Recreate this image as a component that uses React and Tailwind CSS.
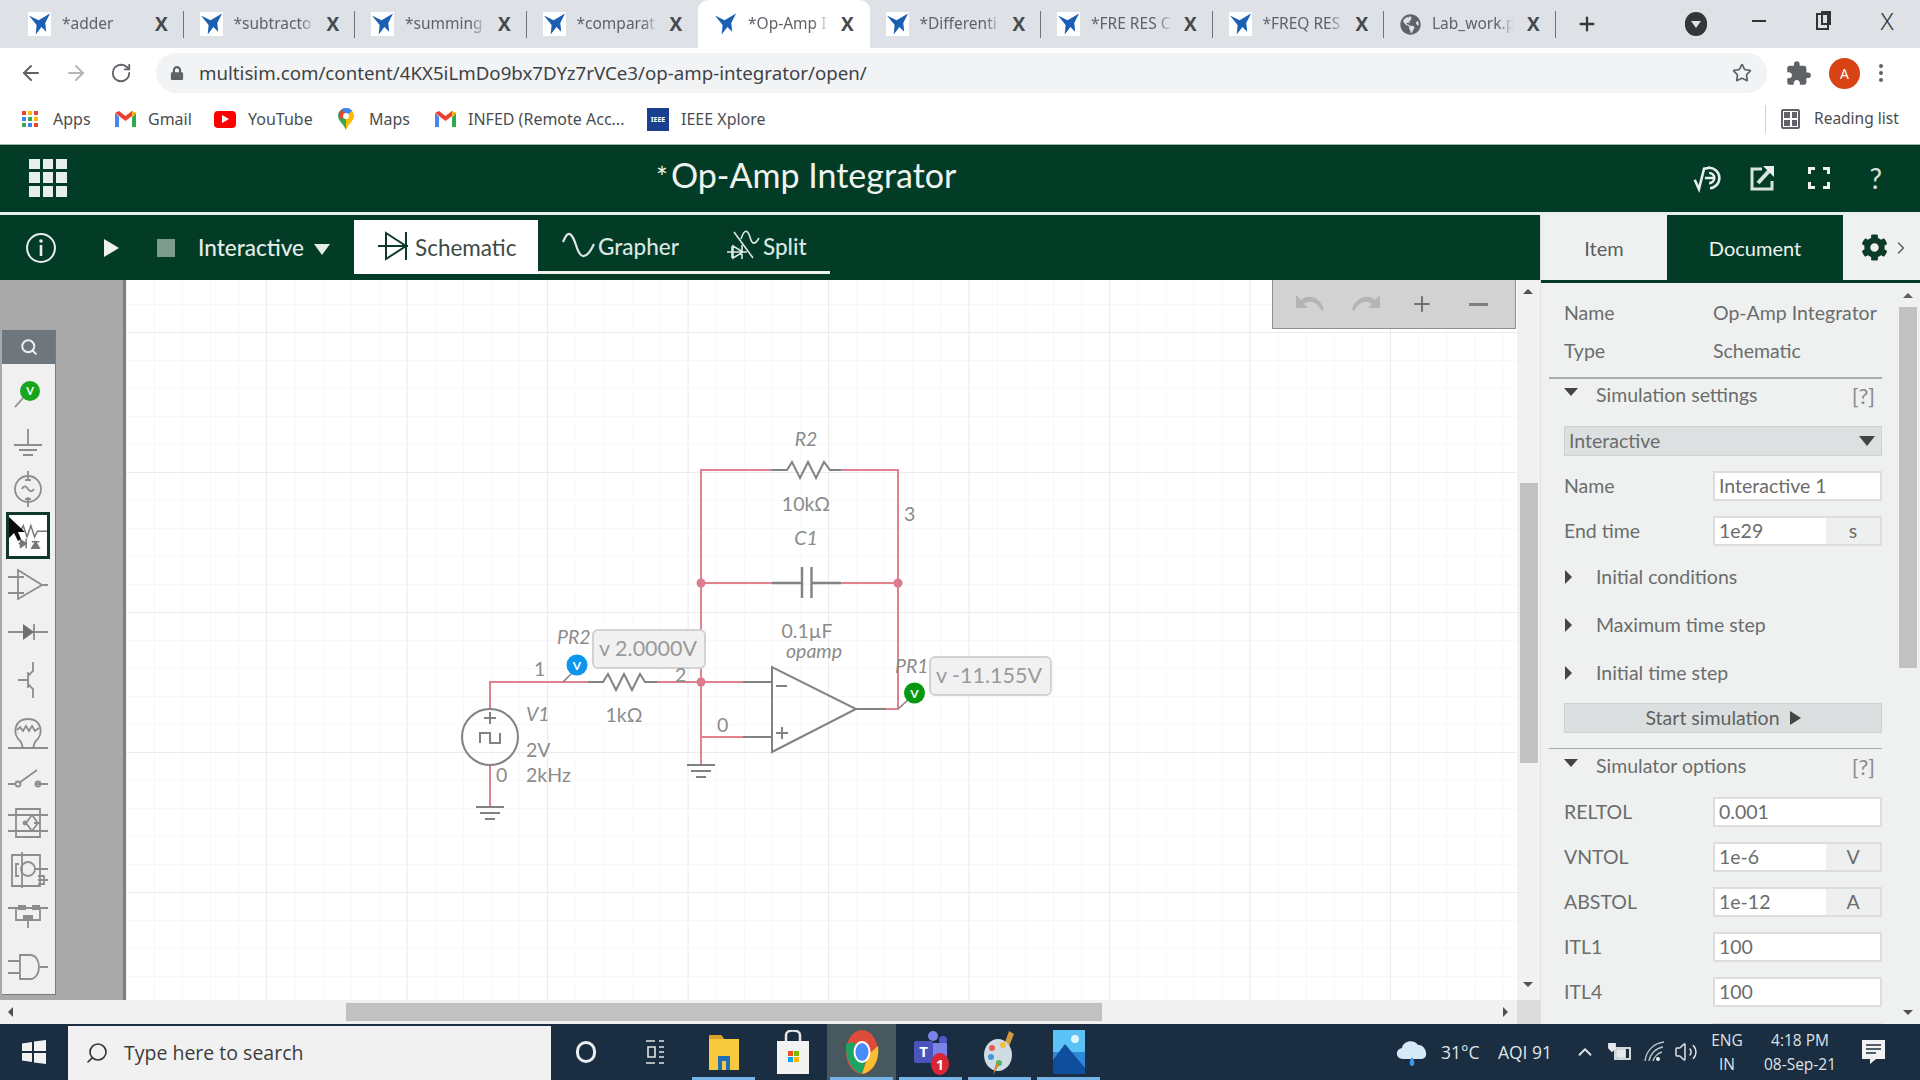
import React from "react";
import { ArrowLeft, ArrowRight, RotateCw, Star, Plus, Search, ChevronUp, Volume2, ChevronRight } from "lucide-react";
import { MdExtension } from "react-icons/md";
import { FaCog, FaLock, FaGlobeAmericas } from "react-icons/fa";

const Logo = () => (
  <svg width="23" height="24" viewBox="0 0 24 24" className="shrink-0 bg-white">
    <path d="M1 3 L11 8 L23 1 L18 11 L19 20 L14 15 L8 23 L9 13 Z" fill="#1b5fb4" />
  </svg>
);

const tabs = ["*adder", "*subtracto", "*summing", "*comparat", "*Op-Amp I", "*Differenti", "*FRE RES C", "*FREQ RES", "Lab_work.p"];

function Tab({ title, index }) {
  const active = index === 4;
  return (
    <div className={active ? "relative flex h-[48px] w-[171.5px] shrink-0 items-center rounded-t-[10px] bg-white pl-[16px]" : "relative flex h-[48px] w-[171.5px] shrink-0 items-center pl-[16px]"}>
      {index === 8 ? <FaGlobeAmericas className="shrink-0 text-[#5f6368]" size={21} /> : <Logo />}
      <span className="ml-[11px] w-[82px] overflow-hidden whitespace-nowrap text-[15.5px] text-[#5f6368] [mask-image:linear-gradient(90deg,#000_80%,transparent)]">{title}</span>
      <span className="absolute left-[143px] text-[19px] font-bold leading-none text-[#45494d] font-['Open_Sans']">X</span>
      {!active && index !== 3 && <span className="absolute right-0 top-[11px] h-[27px] w-px bg-[#70757a]" />}
    </div>
  );
}

function TabStrip() {
  return (
    <div className="flex h-[48px] shrink-0 items-center bg-[#dee1e6] pl-[12px] font-['Noto_Sans']">
      {tabs.map((t, i) => <Tab key={t} title={t} index={i} />)}
      <Plus size={22} strokeWidth={2.5} className="ml-[20px] text-[#33373a]" />
      <div className="ml-[87px] flex h-[24px] w-[22px] items-center justify-center rounded-full bg-[#33373a]">
        <span className="h-0 w-0 border-x-[5px] border-t-[7px] border-x-transparent border-t-[#dee1e6]" />
      </div>
      <span className="ml-[45px] mb-[6px] h-[2px] w-[14px] bg-[#333]" />
      <span className="relative ml-[50px] mb-[6px] h-[17px] w-[13px] border-2 border-[#333] bg-[#dee1e6] before:absolute before:-right-[4px] before:-top-[4px] before:h-[14px] before:w-[10px] before:border-2 before:border-[#333]" />
      <span className="ml-[52px] mb-[6px] text-[24px] font-light leading-none text-[#333]">X</span>
    </div>
  );
}

function AddressRow() {
  return (
    <div className="flex h-[48px] shrink-0 items-center bg-white pt-[2px] font-['Noto_Sans']">
      <ArrowLeft size={24} className="ml-[19px] text-[#5f6368]" />
      <ArrowRight size={24} className="ml-[21px] text-[#b4b7ba]" />
      <RotateCw size={22} className="ml-[22px] text-[#5f6368]" />
      <div className="ml-[24px] flex h-[40px] w-[1611px] items-center rounded-full bg-[#f1f3f4] pl-[14px]">
        <FaLock size={14} className="text-[#5f6368]" />
        <span className="ml-[15px] whitespace-nowrap text-[18.7px] text-[#3f4246]">multisim.com/content/4KX5iLmDo9bx7DYz7rVCe3/op-amp-integrator/open/</span>
        <Star size={20} className="ml-auto mr-[15px] text-[#5f6368]" />
      </div>
      <MdExtension size={27} className="ml-[18px] text-[#5f6368]" />
      <div className="ml-[17px] flex h-[31px] w-[31px] items-center justify-center rounded-full bg-[#d84315] text-[14px] text-white">A</div>
      <div className="ml-[19px] flex flex-col gap-[3px]">
        <span className="h-[4px] w-[4px] rounded-full bg-[#5f6368]" />
        <span className="h-[4px] w-[4px] rounded-full bg-[#5f6368]" />
        <span className="h-[4px] w-[4px] rounded-full bg-[#5f6368]" />
      </div>
    </div>
  );
}

const GmailIcon = () => (
  <svg width="21" height="16" viewBox="0 0 21 16">
    <path d="M0 2 L0 16 L4 16 L4 6 Z" fill="#4285f4" />
    <path d="M21 2 L21 16 L17 16 L17 6 Z" fill="#34a853" />
    <path d="M0 2 L10.5 10 L21 2 L17 0 L10.5 5 L4 0 Z" fill="#ea4335" />
    <path d="M17 0 L21 2 L17 6 Z" fill="#fbbc04" />
  </svg>
);

function Bookmark({ icon, label, className }) {
  return (
    <div className={"flex items-center " + className}>
      <span className="flex w-[22px] shrink-0 justify-center">{icon}</span>
      <span className="ml-[12px] whitespace-nowrap text-[16px] text-[#4a4d50]">{label}</span>
    </div>
  );
}

const appsDots = [
  "h-[4px] w-[4px] bg-[#ea4335]", "h-[4px] w-[4px] bg-[#fbbc04]", "h-[4px] w-[4px] bg-[#ea4335]",
  "h-[4px] w-[4px] bg-[#4285f4]", "h-[4px] w-[4px] bg-[#34a853]", "h-[4px] w-[4px] bg-[#fbbc04]",
  "h-[4px] w-[4px] bg-[#34a853]", "h-[4px] w-[4px] bg-[#4285f4]", "h-[4px] w-[4px] bg-[#ea4335]",
];

function BookmarkRow() {
  return (
    <div className="flex h-[48px] shrink-0 items-center bg-white pb-[2px] pl-[19px] font-['Noto_Sans']">
      <Bookmark className="w-[95px]" label="Apps" icon={
        <span className="grid grid-cols-3 gap-[2px]">{appsDots.map((c, i) => <i key={i} className={c} />)}</span>
      } />
      <Bookmark className="w-[100px]" label="Gmail" icon={<GmailIcon />} />
      <Bookmark className="w-[121px]" label="YouTube" icon={
        <span className="flex h-[17px] w-[22px] items-center justify-center rounded-[4px] bg-[#f00]"><i className="h-0 w-0 border-y-[4px] border-l-[7px] border-y-transparent border-l-white" /></span>
      } />
      <Bookmark className="w-[99px]" label="Maps" icon={
        <svg width="16" height="22" viewBox="0 0 16 22">
          <path d="M8 0 C3 0 0 4 0 8 C0 13 5 15 8 22 Z" fill="#34a853" />
          <path d="M8 0 C13 0 16 4 16 8 C16 13 11 15 8 22 Z" fill="#fbbc04" />
          <path d="M3 2 C6 -1 11 -1 14 3 L8 8 Z" fill="#4285f4" />
          <path d="M1 5 L4 2 L8 6 L3 12 Z" fill="#ea4335" />
          <circle cx="8" cy="8" r="3" fill="#fff" />
        </svg>
      } />
      <Bookmark className="w-[213px]" label="INFED (Remote Acc..." icon={<GmailIcon />} />
      <Bookmark className="w-[200px]" label="IEEE Xplore" icon={
        <span className="flex h-[23px] w-[23px] items-center justify-center bg-[#1a3f8f] text-[7px] font-bold leading-none text-white">IEEE</span>
      } />
      <div className="ml-auto flex h-[28px] w-[155px] items-center border-l border-[#d0d2d4] pl-[15px]">
        <span className="grid h-[20px] w-[19px] grid-cols-2 gap-[2px] rounded-[2px] border-2 border-[#5f6368] p-[1px]">
          <i className="bg-[#5f6368]" /><i className="bg-[#5f6368]" /><i className="bg-[#5f6368]" /><i className="bg-[#5f6368]" />
        </span>
        <span className="ml-[14px] whitespace-nowrap text-[15.5px] text-[#4a4d50]">Reading list</span>
      </div>
    </div>
  );
}

function AppHeader() {
  return (
    <div className="relative flex h-[71px] shrink-0 items-center border-t border-[#9fb5ab] border-b-[3px] border-b-[#e9efec] bg-[#033c26] pb-[2px] font-['Lato']">
      <div className="ml-[29px] grid h-[38px] w-[38px] grid-cols-3 gap-[3px]">
        {Array.from({ length: 9 }).map((_, i) => <i key={i} className="bg-[#e8eeeb]" />)}
      </div>
      <div className="mb-[5px] ml-[589px] flex items-baseline whitespace-nowrap text-[34px] leading-none text-[#eef3f0]">
        <span className="mr-[3px] text-[28px]">*</span>Op-Amp Integrator
      </div>
      <div className="ml-auto flex items-center">
        <svg width="34" height="30" viewBox="0 0 40 34" fill="none" stroke="#e8eeeb" strokeWidth="3" className="mr-[23px]">
          <path d="M2 19 L7 30 L13 6 L20 5" />
          <path d="M18 5 A12 12 0 1 1 20 29" />
          <path d="M19 11 A6 6 0 1 1 19 23 M14 17 H24" />
        </svg>
        <svg width="24" height="28" viewBox="0 0 24 28" fill="none" stroke="#d9e3de" strokeWidth="3" className="mr-[34px]">
          <path d="M12 5 H2 V25 H22 V17" />
          <path d="M8 19 L20 6" strokeWidth="4" />
          <path d="M13 2 H24 V13 Z" fill="#e8eeeb" stroke="none" />
        </svg>
        <svg width="22" height="22" viewBox="0 0 22 22" fill="none" stroke="#eef3f0" strokeWidth="3" className="mr-[39px]">
          <path d="M1.5 7 V1.5 H7 M15 1.5 H20.5 V7 M1.5 15 V20.5 H7 M15 20.5 H20.5 V15" />
        </svg>
        <span className="mr-[38px] text-[28px] leading-none text-[#d9e3de]">?</span>
      </div>
    </div>
  );
}

function Toolbar() {
  return (
    <div className="flex h-[65px] shrink-0 items-center bg-[#033c26] font-['Lato']">
      <svg width="32" height="32" viewBox="0 0 32 32" fill="none" stroke="#e8eeeb" strokeWidth="2" className="ml-[25px]">
        <circle cx="16" cy="16" r="14" />
        <circle cx="16" cy="9" r="1.8" fill="#e8eeeb" stroke="none" />
        <path d="M16 13 V24" strokeWidth="2.6" />
      </svg>
      <span className="ml-[47px] h-0 w-0 border-y-[9px] border-l-[15px] border-y-transparent border-l-[#eef3f0]" />
      <span className="ml-[38px] h-[18px] w-[18px] bg-[#7d9a8e]" />
      <span className="ml-[23px] whitespace-nowrap text-[22.5px] font-medium text-[#e4ece8]">Interactive</span>
      <span className="ml-[10px] mt-[3px] h-0 w-0 border-x-[8px] border-t-[11px] border-x-transparent border-t-[#e4ece8]" />
      <div className="ml-[24px] flex items-stretch self-start pt-[5px]">
        <div className="flex h-[54px] w-[184px] items-center bg-white pl-[24px] text-[#3d4b45]">
          <svg width="32" height="32" viewBox="0 0 32 32" fill="none" stroke="#0c3b28" strokeWidth="2" className="mb-[4px]">
            <path d="M0 17 H30 M8 4 L28 17 L8 30 Z M28 3 V31" />
          </svg>
          <span className="ml-[5px] pt-[2px] text-[22.5px]">Schematic</span>
        </div>
        <div className="flex h-[54px] w-[292px] items-center border-b-[3px] border-[#eef3f0] text-[22.5px] font-medium text-[#dde6e2]">
          <svg width="34" height="30" viewBox="0 0 34 30" fill="none" stroke="#dde6e2" strokeWidth="2.2" className="ml-[24px]">
            <path d="M1 11 C6 -2 10 2 14 14 C18 28 24 30 32 13" />
          </svg>
          <span className="ml-[2px] pt-[2px]">Grapher</span>
          <svg width="36" height="32" viewBox="0 0 36 32" fill="none" stroke="#dde6e2" strokeWidth="1.6" className="ml-[48px]">
            <path d="M0 22 H20 M5 16 V28 M6 16 L16 22 L6 28 Z M15 15 V29" />
            <path d="M7 2 L26 28" />
            <path d="M14 9 C18 -3 21 1 23 7 C25 15 28 15 32 8" />
          </svg>
          <span className="pt-[2px]">Split</span>
        </div>
      </div>
    </div>
  );
}

const P = { fill: "none", stroke: "#8d8d8d", strokeWidth: 1.8 };

function Pal({ className, children }) {
  return <svg width="40" height="36" viewBox="0 0 40 36" {...P} className={"ml-[6px] block " + className}>{children}</svg>;
}

function Palette() {
  return (
    <div className="ml-[2px] mt-[50px] flex h-[665px] w-[54px] flex-col border-b border-r border-[#7a7a7a] bg-[#f0f0f0]">
      <div className="flex h-[34px] shrink-0 items-center justify-center bg-[#6d777d]">
        <Search size={18} strokeWidth={2.6} className="text-[#eef0f0]" />
      </div>
      <Pal className="mt-[9px]">
        <path d="M15 25 L7 34" />
        <circle cx="22" cy="18" r="10" fill="#16a51c" stroke="none" />
        <text x="22" y="22" textAnchor="middle" fontSize="11" fontWeight="700" fill="#fff" stroke="none" fontFamily="Lato">V</text>
      </Pal>
      <Pal className="mt-[16px]">
        <path d="M20 4 V20 M6 20 H34 M11 25 H29 M15 30 H25" />
      </Pal>
      <Pal className="mt-[10px]">
        <circle cx="20" cy="18" r="13" />
        <path d="M20 0 V10 M20 26 V36 M14 18 C16 14 18 15 20 18 C22 21 24 21 26 18 M17 9 H23 M17 28 H23" />
      </Pal>
      <div className="relative ml-[4px] mt-[5px] flex h-[47px] w-[44px] items-center justify-center border-[3px] border-[#10392a] bg-white">
        <svg width="38" height="34" viewBox="0 0 40 36" fill="none" stroke="#777" strokeWidth="1.6">
          <path d="M0 13 H12 L15 7 L19 19 L23 7 L27 19 L30 13 H40" />
          <path d="M10 26 H18 M12 22 L18 26 L12 30 Z M18 21 V31 M24 24 H32 M28 24 L24 31 H32 Z" fill="#777" />
        </svg>
        <svg width="18" height="26" viewBox="0 0 18 26" className="absolute -left-[1px] top-[1px]">
          <path d="M1 1 L1 22 L6 17 L10 25 L13 23 L10 16 L17 16 Z" fill="#0a0a0a" />
        </svg>
      </div>
      <Pal className="mt-[8px]">
        <path d="M10 3 L34 18 L10 32 Z M0 10 H16 M0 26 H16 M34 18 H40" />
      </Pal>
      <Pal className="mt-[11px]">
        <path d="M0 18 H40 M26 10 V26" />
        <path d="M15 10 L26 18 L15 26 Z" fill="#707070" stroke="none" />
      </Pal>
      <Pal className="mt-[12px]">
        <path d="M10 18 H20 M20 10 V26 M25 0 V9 L20 14 M20 22 L25 27 V36" />
      </Pal>
      <Pal className="mt-[17px]">
        <path d="M0 33 H40 M13 27 C3 18 7 4 20 4 C33 4 37 18 27 27 L25 33 H15 Z M9 15 L12 12 L15 16 L18 11 L21 16 L24 11 L27 16 L31 13" />
      </Pal>
      <Pal className="mt-[11px]">
        <path d="M0 22 H8 M28 22 H40 M11 21 L29 8" />
        <circle cx="10" cy="22" r="2.5" />
        <circle cx="30" cy="22" r="2.5" />
      </Pal>
      <Pal className="mt-[7px]">
        <path d="M8 4 H32 V32 H8 Z M0 10 H40 M0 26 H40 M24 10 L30 18 L24 26 L18 18 Z M26 18 H32" />
        <circle cx="17" cy="18" r="1.5" fill="#8d8d8d" />
      </Pal>
      <Pal className="mt-[11px]">
        <path d="M4 3 H32 V34 H4 Z M26 4 V2 M14 0 V36 M26 17 H40 M11 12 H8 V24 H11 M30 24 H36 V32 H30 M30 28 H40" />
        <circle cx="20" cy="17" r="7" />
      </Pal>
      <Pal className="mt-[6px]">
        <path d="M0 14 H40 M8 14 V26 H32 V14 M20 24 V34" />
        <path d="M10 11 H18 V16 H10 Z M24 11 H32 V16 H24 Z M15 21 H25 V26 H15 Z" fill="#8d8d8d" stroke="none" />
      </Pal>
      <Pal className="mt-[19px]">
        <path d="M0 12 H12 M0 24 H12 M12 6 H22 C34 6 34 30 22 30 H12 Z M32 18 H40" />
      </Pal>
    </div>
  );
}

const W = "#e2828f";
const G = "#828282";

function Ground({ x, y }) {
  return <path d={`M${x - 14} ${y} H${x + 14} M${x - 10} ${y + 6} H${x + 10} M${x - 5} ${y + 12} H${x + 5}`} stroke={G} strokeWidth="2" fill="none" />;
}

function Lbl({ x, y, children, italic, anchor = "start", size = 19.5 }) {
  return <text x={x} y={y} fontSize={size} textAnchor={anchor} fontStyle={italic ? "italic" : "normal"} fill="#8b8b8b" fontFamily="Lato">{children}</text>;
}

function Badge({ x, y, w, children }) {
  return (
    <g>
      <rect x={x} y={y} width={w} height="38" rx="5" fill="#f1f1f1" stroke="#d2d2d2" strokeWidth="2" />
      <text x={x + 6} y={y + 26} fontSize="21.5" fill="#9a9a9a" fontFamily="Lato">{children}</text>
    </g>
  );
}

function Circuit() {
  return (
    <svg width="1392" height="720" viewBox="125 280 1392 720" fill="none" className="absolute left-0 top-0">
      <g stroke={W} strokeWidth="2">
        <path d="M771 470 H700 V737 M840 470 H897 V709 H885" />
        <path d="M700 583 H771 M840 583 H897" />
        <path d="M489 710 V682 H587 M656 682 H742" />
        <path d="M742 737 H700 V765" />
        <path d="M489 766 V807" />
      </g>
      <g stroke={G} strokeWidth="2">
        <path d="M771 470 H786 L791 462 L799 478 L807 462 L815 478 L823 462 L829 470 H840" />
        <path d="M771 583 H801 M811 583 H840 M801 567 V598 M810.5 567 V598" strokeWidth="2.4" />
        <path d="M587 682 H602 L607 674 L615 690 L623 674 L631 690 L639 674 L644 682 H656" />
        <path d="M742 682 H771 M742 737 H771 M855 709 H885" />
        <path d="M771 667 V752 L855 709 Z" />
        <path d="M775 686 H786 M775 733 H787 M781 727 V739" />
        <ellipse cx="489" cy="737" rx="28" ry="28" />
        <path d="M483 718 H495 M489 712 V724" />
        <path d="M479 743 V733 H489 V743 H499 V733" />
      </g>
      <Ground x={489} y={807} />
      <Ground x={700} y={765} />
      <circle cx="700" cy="583" r="4.5" fill="#dc7c8a" />
      <circle cx="897" cy="583" r="4.5" fill="#dc7c8a" />
      <circle cx="700" cy="682" r="4.5" fill="#dc7c8a" />
      <path d="M562 682 L572 672" stroke={G} strokeWidth="1.6" />
      <circle cx="576" cy="665" r="10.5" fill="#0b95ec" />
      <text x="576" y="670" textAnchor="middle" fontSize="12" fontWeight="700" fill="#fff" fontFamily="Lato">V</text>
      <path d="M897 709 L908 699" stroke={G} strokeWidth="1.6" />
      <circle cx="913.5" cy="693" r="10.5" fill="#06980f" />
      <text x="913.5" y="698" textAnchor="middle" fontSize="12" fontWeight="700" fill="#fff" fontFamily="Lato">V</text>
      <Lbl x={805} y={446} italic anchor="middle">R2</Lbl>
      <Lbl x={805} y={511} anchor="middle">10kΩ</Lbl>
      <Lbl x={805} y={545} italic anchor="middle">C1</Lbl>
      <Lbl x={903} y={521}>3</Lbl>
      <Lbl x={806} y={638} anchor="middle">0.1µF</Lbl>
      <Lbl x={813} y={658} italic anchor="middle">opamp</Lbl>
      <Lbl x={533} y={676}>1</Lbl>
      <Lbl x={623} y={722} anchor="middle">1kΩ</Lbl>
      <Lbl x={525} y={721} italic>V1</Lbl>
      <Lbl x={525} y={757}>2V</Lbl>
      <Lbl x={495} y={782}>0</Lbl>
      <Lbl x={525} y={782}>2kHz</Lbl>
      <Lbl x={716} y={732}>0</Lbl>
      <Lbl x={556} y={644} italic>PR2</Lbl>
      <Lbl x={894} y={673} italic>PR1</Lbl>
      <Badge x={592} y={630} w={112}>v 2.0000V</Badge>
      <Lbl x={674} y={682}>2</Lbl>
      <Badge x={929} y={657} w={121}>v -11.155V</Badge>
    </svg>
  );
}

function Canvas() {
  return (
    <div className="relative h-[720px] flex-1 overflow-hidden bg-white bg-[linear-gradient(#ececec_1px,transparent_1px),linear-gradient(90deg,#ececec_1px,transparent_1px),linear-gradient(#f8f8f8_1px,transparent_1px),linear-gradient(90deg,#f8f8f8_1px,transparent_1px)] bg-[size:140.5px_140px,140.5px_140px,28.1px_28px,28.1px_28px] bg-[position:0_52px,140px_0,0_24px,28px_0]">
      <Circuit />
      <div className="absolute right-[1px] top-0 flex h-[49px] w-[244px] items-center border-x border-b border-[#8f8f8f] bg-[#d2d2d2] pl-[22px]">
        <svg width="30" height="20" viewBox="0 0 30 20" fill="#b4b4b4">
          <path d="M1 1 L1 14 L13 14 L9 10 C14 6 22 7 27 17 L29 15 C24 2 13 0 6 6 Z" />
        </svg>
        <svg width="30" height="20" viewBox="0 0 30 20" fill="#b4b4b4" className="ml-[26px]">
          <path d="M29 1 L29 14 L17 14 L21 10 C16 6 8 7 3 17 L1 15 C6 2 17 0 24 6 Z" />
        </svg>
        <Plus size={24} strokeWidth={2} className="ml-[29px] text-[#6f6f6f]" />
        <span className="ml-[35px] h-[3px] w-[19px] bg-[#7f7f7f]" />
      </div>
    </div>
  );
}

function HScroll() {
  return (
    <div className="flex h-[24px] shrink-0 items-center bg-[#f1f1f1]">
      <span className="ml-[8px] h-0 w-0 border-y-[5px] border-r-[5px] border-y-transparent border-r-[#505050]" />
      <div className="ml-[333px] h-[18px] w-[756px] bg-[#c1c1c1]" />
      <span className="ml-[401px] h-0 w-0 border-y-[5px] border-l-[5px] border-y-transparent border-l-[#505050]" />
    </div>
  );
}

function VScroll() {
  return (
    <div className="relative h-[744px] w-[23px] shrink-0 bg-[#f1f1f1]">
      <span className="absolute left-[6px] top-[9px] h-0 w-0 border-x-[5px] border-b-[5px] border-x-transparent border-b-[#505050]" />
      <div className="absolute left-[3px] top-[203px] h-[280px] w-[18px] bg-[#c1c1c1]" />
      <span className="absolute left-[6px] top-[702px] h-0 w-0 border-x-[5px] border-t-[5px] border-x-transparent border-t-[#505050]" />
      <div className="absolute bottom-0 left-0 h-[24px] w-full bg-[#dcdcdc]" />
    </div>
  );
}

function Row({ label, children, className = "" }) {
  return (
    <div className={"flex items-center " + className}>
      <span className="w-[149px] text-[19.5px] text-[#6a6d6c]">{label}</span>
      {children}
    </div>
  );
}

function Field({ value, unit }) {
  return (
    <div className="flex h-[30px] w-[169px] items-center border-2 border-[#dcdddc] bg-white pl-[4px] text-[19.5px] text-[#6a6d6c]">
      <span className="flex-1">{value}</span>
      {unit && <span className="flex h-full w-[54px] items-center justify-center bg-[#eef0ef]">{unit}</span>}
    </div>
  );
}

function Section({ label, className = "" }) {
  return (
    <div className={"flex h-[48px] items-center text-[19.5px] text-[#6a6d6c] " + className}>
      <span className="ml-[1px] h-0 w-0 border-y-[7px] border-l-[7px] border-y-transparent border-l-[#444]" />
      <span className="ml-[24px]">{label}</span>
    </div>
  );
}

function Head({ label }) {
  return (
    <div className="flex h-full items-center text-[19.5px] text-[#6a6d6c]">
      <span className="mb-[7px] h-0 w-0 border-x-[7px] border-t-[8px] border-x-transparent border-t-[#444]" />
      <span className="ml-[18px]">{label}</span>
      <span className="ml-auto mr-[7px] text-[22px] text-[#8a8a8a]">[?]</span>
    </div>
  );
}

function RightPanel() {
  return (
    <div className="flex h-[809px] w-[380px] shrink-0 flex-col overflow-hidden border-l border-[#dfe2e0] bg-[#eff1f0] font-['Lato']">
      <div className="flex h-[68px] shrink-0 border-b-[3px] border-[#033c26] text-[20px]">
        <div className="flex w-[126px] items-center justify-center text-[#5b5e5d]">Item</div>
        <div className="flex w-[176px] items-center justify-center bg-[#033c26] text-[#eef3f0]">Document</div>
        <div className="flex flex-1 items-center pl-[18px] text-[#0c3b28]">
          <FaCog size={27} />
          <ChevronRight size={20} strokeWidth={1.6} className="ml-[3px] text-[#4c5f57]" />
        </div>
      </div>
      <div className="flex min-h-0 flex-1">
        <div className="w-[358px] shrink-0 pl-[23px] pr-[17px] pt-[11px]">
          <Row label="Name" className="h-[38px]"><span className="whitespace-nowrap text-[19.5px] text-[#6a6d6c]">Op-Amp Integrator</span></Row>
          <Row label="Type" className="h-[38px]"><span className="text-[19.5px] text-[#6a6d6c]">Schematic</span></Row>
          <div className="-ml-[15px] mt-[7px] h-[2px] bg-[#a9acab]" />
          <div className="h-[32px]"><Head label="Simulation settings" /></div>
          <div className="mt-[15px] flex h-[30px] items-center justify-between border border-[#cfd2d1] bg-[#dde0e0] pl-[4px] pr-[6px] text-[19.5px] text-[#6a6d6c]">
            <span>Interactive</span>
            <span className="h-0 w-0 border-x-[8px] border-t-[10px] border-x-transparent border-t-[#444]" />
          </div>
          <Row label="Name" className="mt-[15px]"><Field value="Interactive 1" /></Row>
          <Row label="End time" className="mt-[15px]"><Field value="1e29" unit="s" /></Row>
          <Section label="Initial conditions" className="mt-[7px]" />
          <Section label="Maximum time step" />
          <Section label="Initial time step" />
          <div className="mt-[6px] flex h-[30px] items-center justify-center border border-[#cfd2d1] bg-[#dcdfdf] text-[19.5px] text-[#5f6261]">
            Start simulation
            <span className="ml-[10px] h-0 w-0 border-y-[7px] border-l-[11px] border-y-transparent border-l-[#444]" />
          </div>
          <div className="-ml-[15px] mt-[15px] h-[1px] bg-[#a9acab]" />
          <div className="h-[34px]"><Head label="Simulator options" /></div>
          <div className="mt-[14px] flex flex-col gap-[15px]">
            <Row label="RELTOL"><Field value="0.001" /></Row>
            <Row label="VNTOL"><Field value="1e-6" unit="V" /></Row>
            <Row label="ABSTOL"><Field value="1e-12" unit="A" /></Row>
            <Row label="ITL1"><Field value="100" /></Row>
            <Row label="ITL4"><Field value="100" /></Row>
          </div>
          <div className="ml-[149px] mt-[16px] h-[30px] w-[169px] border-2 border-[#dcdddc] bg-white" />
        </div>
        <div className="relative flex-1">
          <span className="absolute left-[4px] top-[10px] h-0 w-0 border-x-[5px] border-b-[5px] border-x-transparent border-b-[#606060]" />
          <div className="absolute left-[0px] top-[24px] h-[361px] w-[18px] bg-[#c1c1c1]" />
          <span className="absolute left-[4px] top-[727px] h-0 w-0 border-x-[5px] border-t-[5px] border-x-transparent border-t-[#505050]" />
        </div>
      </div>
    </div>
  );
}

function TaskSlot({ children, active, bar }) {
  return (
    <div className={active ? "relative flex h-full w-[69px] items-center justify-center bg-[#47595f]" : "relative flex h-full w-[69px] items-center justify-center"}>
      {children}
      {bar && <span className="absolute bottom-0 left-[3px] right-[3px] h-[3px] bg-[#76b3e6]" />}
    </div>
  );
}

function Taskbar() {
  return (
    <div className="flex h-[56px] shrink-0 items-center bg-[#1b2d40] font-['Open_Sans'] text-white">
      <div className="flex w-[68px] justify-center">
        <svg width="24" height="24" viewBox="0 0 24 24" fill="#f2f2f2">
          <path d="M0 3.5 L10 2 V11 H0 Z M12 1.6 L24 0 V11 H12 Z M0 13 H10 V22 L0 20.5 Z M12 13 H24 V24 L12 22.4 Z" />
        </svg>
      </div>
      <div className="flex h-[54px] w-[483px] items-center self-end bg-[#f1f1f1] pl-[17px] text-[19.5px] text-[#3c3c3c]">
        <Search size={24} strokeWidth={1.6} className="-scale-x-100 text-[#333]" />
        <span className="ml-[15px]">Type here to search</span>
      </div>
      <div className="flex h-full items-center">
        <TaskSlot><span className="h-[22px] w-[20px] rounded-full border-[3px] border-[#e9eef0]" /></TaskSlot>
        <TaskSlot>
          <svg width="20" height="24" viewBox="0 0 20 24" fill="none" stroke="#e0e4e6" strokeWidth="1.6">
            <path d="M1 1 H10 M14 1 H19 M3 7 H10 V17 H3 Z M14 7 H19 M14 12 H19 M14 17 H19 M1 23 H10 M14 23 H19" />
          </svg>
        </TaskSlot>
        <TaskSlot bar>
          <svg width="30" height="36" viewBox="0 0 30 36">
            <path d="M0 1 H12 L15 5 H30 V36 H0 Z" fill="#f6c93e" />
            <path d="M0 1 H12 L15 5 H0 Z" fill="#dba12b" />
            <path d="M9 22 H21 V36 H17 V27 H13 V36 H9 Z" fill="#1f6fb8" />
          </svg>
        </TaskSlot>
        <TaskSlot>
          <svg width="34" height="44" viewBox="0 0 34 44">
            <path d="M10 12 V5 C10 -1 24 -1 24 5 V12" fill="none" stroke="#e8e8e8" strokeWidth="2.5" />
            <rect x="1" y="11" width="32" height="33" fill="#f3f3f3" />
            <rect x="12" y="21" width="5" height="5" fill="#f25022" />
            <rect x="18" y="21" width="5" height="5" fill="#7fba00" />
            <rect x="12" y="27" width="5" height="5" fill="#00a4ef" />
            <rect x="18" y="27" width="5" height="5" fill="#ffb900" />
          </svg>
        </TaskSlot>
        <TaskSlot active bar>
          <svg width="34" height="44" viewBox="0 0 34 44">
            <ellipse cx="17" cy="22" rx="16" ry="22" fill="#de4b39" />
            <path d="M1 14 C0 30 8 42 17 44 L22 26 L8 12 Z" fill="#1da462" />
            <path d="M33 16 C35 30 28 42 17 44 L24 24 Z" fill="#fbc02d" />
            <ellipse cx="17" cy="22" rx="8.5" ry="11" fill="#fff" />
            <ellipse cx="17" cy="22" rx="6.5" ry="9" fill="#4a8bf5" />
          </svg>
        </TaskSlot>
        <TaskSlot bar>
          <svg width="36" height="46" viewBox="0 0 36 46">
            <circle cx="20" cy="7" r="5" fill="#7b83eb" />
            <circle cx="30" cy="11" r="4" fill="#5059c9" />
            <path d="M12 14 H34 V30 C34 36 14 36 12 30 Z" fill="#7b83eb" />
            <rect x="1" y="12" width="19" height="22" rx="2" fill="#4b53bc" />
            <text x="10.5" y="28" textAnchor="middle" fontSize="15" fontWeight="700" fill="#fff" fontFamily="Open Sans">T</text>
            <ellipse cx="27" cy="35" rx="9" ry="11" fill="#d92534" />
            <text x="27" y="41" textAnchor="middle" fontSize="14" fontWeight="700" fill="#fff" fontFamily="Open Sans">1</text>
          </svg>
        </TaskSlot>
        <TaskSlot bar>
          <svg width="34" height="46" viewBox="0 0 34 46">
            <path d="M26 2 L31 5 L20 32 L16 30 Z" fill="#d09a3e" />
            <ellipse cx="15" cy="26" rx="14" ry="16" fill="#cfdce4" />
            <circle cx="9" cy="19" r="3" fill="#e45c4c" />
            <circle cx="8" cy="28" r="3" fill="#3f9ad8" />
            <circle cx="16" cy="34" r="3" fill="#5ab55a" />
            <circle cx="20" cy="16" r="3" fill="#f0c23f" />
            <path d="M13 34 L10 46 L16 36 Z" fill="#d0862c" />
          </svg>
        </TaskSlot>
        <TaskSlot bar>
          <svg width="32" height="44" viewBox="0 0 32 44">
            <rect width="32" height="44" fill="#2f88dc" />
            <rect width="32" height="22" fill="#5cc1f5" />
            <circle cx="22" cy="9" r="4" fill="#dff4ff" />
            <path d="M0 44 V30 L12 14 L32 38 V44 Z" fill="#0f4e9c" />
          </svg>
        </TaskSlot>
      </div>
      <div className="ml-auto flex h-full w-[525px] items-center text-[#dfe3e6]">
        <svg width="34" height="30" viewBox="0 0 34 30" className="shrink-0">
          <path d="M8 22 C0 22 0 12 7 11 C8 3 20 2 23 8 C31 7 35 22 26 22 Z" fill="#d6e9f6" />
          <path d="M17 20 C13 26 15 29 17 29 C19 29 21 26 17 20 Z" fill="#3b9ae8" />
        </svg>
        <div className="ml-[12px] flex w-[111px] justify-between whitespace-nowrap text-[17.5px]"><span>31°C</span><span>AQI 91</span></div>
        <ChevronUp size={22} className="ml-[22px] shrink-0" />
        <svg width="24" height="20" viewBox="0 0 24 20" fill="none" stroke="#e6e9eb" strokeWidth="1.8" className="ml-[12px] shrink-0">
          <rect x="7" y="6" width="15" height="11" />
          <rect x="9" y="8" width="8" height="7" fill="#e6e9eb" />
          <path d="M1 2 H7 V6 L4 9 L1 6 Z" fill="#e6e9eb" />
        </svg>
        <svg width="22" height="22" viewBox="0 0 22 22" fill="none" stroke="#b7c0c6" strokeWidth="1.4" className="ml-[12px] shrink-0">
          <path d="M1 20 C2 10 10 2 20 1 M5 20 C6 13 12 7 19 6 M9 20 C10 16 14 12 18 11" />
          <circle cx="14" cy="18" r="2" fill="#eef0f2" stroke="none" />
        </svg>
        <Volume2 size={24} strokeWidth={1.5} className="ml-[8px] shrink-0" />
        <div className="ml-[11px] flex w-[36px] shrink-0 flex-col items-center text-[15.5px] leading-[24px]"><span>ENG</span><span>IN</span></div>
        <div className="ml-[17px] flex w-[76px] shrink-0 flex-col items-center whitespace-nowrap text-[15.5px] leading-[24px]"><span>4:18 PM</span><span>08-Sep-21</span></div>
        <svg width="26" height="26" viewBox="0 0 26 26" className="ml-[23px] shrink-0">
          <path d="M1 1 H24 V20 H15 L9 25 V20 H1 Z" fill="#f2f2f2" />
          <path d="M5 6 H20 M5 10 H20 M5 14 H15" stroke="#1b2d40" strokeWidth="1.5" />
        </svg>
      </div>
    </div>
  );
}

export default function App() {
  return (
    <div className="flex h-[1080px] w-[1920px] flex-col overflow-hidden bg-white">
      <TabStrip />
      <AddressRow />
      <BookmarkRow />
      <AppHeader />
      <div className="flex h-[809px] shrink-0">
        <div className="flex w-[1540px] shrink-0 flex-col">
          <Toolbar />
          <div className="flex flex-1">
            <div className="flex w-[1517px] shrink-0 flex-col">
              <div className="flex h-[720px]">
                <div className="w-[126px] shrink-0 border-r-[3px] border-[#7e7e7e] bg-[#a9a9a9]"><Palette /></div>
                <Canvas />
              </div>
              <HScroll />
            </div>
            <VScroll />
          </div>
        </div>
        <RightPanel />
      </div>
      <Taskbar />
    </div>
  );
}
